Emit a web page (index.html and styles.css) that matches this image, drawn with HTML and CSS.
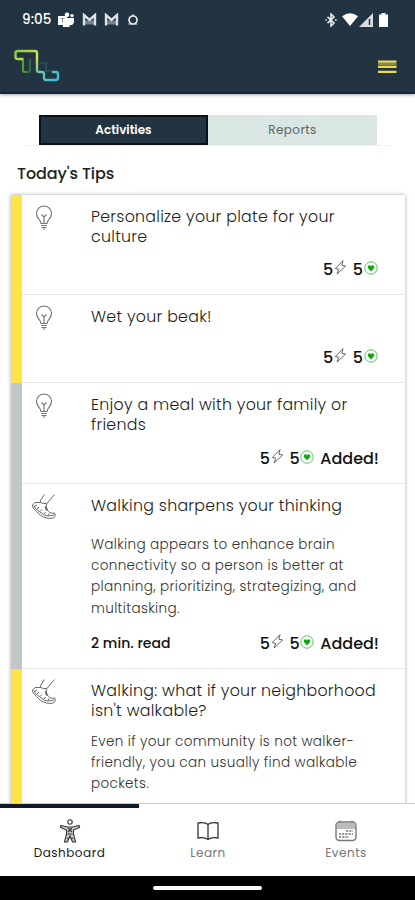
FILE: index.html
```
<!DOCTYPE html>
<html lang="en">
<head>
<meta charset="utf-8">
<title>Dashboard</title>
<link rel="stylesheet" href="styles.css">
</head>
<body>
<svg class="defs" width="0" height="0">
  <symbol id="bulb" viewBox="0 0 18 26"><g fill="none" stroke="#777" stroke-width="1.200"><path d="M6 18.500c0-4-4.500-4.500-4.500-10a7.500 7.500 0 0 1 15 0c0 5.500-4.500 6-4.500 10z"/><path d="M9 18v-6L6.500 9.500M9 12l2.500-2.500M6 20.500h6M6.500 22.500h5M8 24h2"/></g></symbol>
  <symbol id="shoe" viewBox="0 0 26 26"><g fill="none" stroke="#666" stroke-width="1"><path d="M13.500 1.500 9.500 7.500v2L4 9.500 1.500 12c0 3 2 4.500 4 6.500 3 3.500 6 5.500 10 6.500 3 .7 6 .5 7.500-.5 1.300-1 1.500-3.500.5-4.500-2 .5-5 0-6-1.500-1.500-2-3-3.500-2-7.500L23.500 1.500"/><path d="M9.500 9.500q3 1.500 6 1M3 12.500c1 4 5 5.500 8 8s7 3 12 1.500"/><path d="m14.500 13.500 1.500 4" stroke-width="2"/><path d="M4 13l2-1M6 16l2-2M9 18.500l2-2M13 21l1.500-2M17 22.500l1-2"/></g></symbol>
  <symbol id="bolt" viewBox="0 0 12 15"><path d="M8.500.7.800 8.500l3.400.8L2.600 14 11.200 6 7.400 5.300z" fill="none" stroke="#555" stroke-width=".9"/></symbol>
  <symbol id="heart" viewBox="0 0 14 14"><circle cx="7" cy="7" r="6.200" fill="none" stroke="#35b435" stroke-width=".8"/><path d="M7 10.500 4 7.300C2.700 5.500 5.300 3 7 5.200 8.700 3 11.300 5.500 10 7.300z" fill="#12a812"/></symbol>
</svg>
<header class="top">
  <div class="status">
    <div class="status-left">
      <span class="clock">9:05</span>
      <svg class="teams" viewBox="0 0 17 16"><path d="M0 4h9v9H0zM10 6h6v4q-1 4-5 3zM4 6h7.500v9H5z" fill="#fff"/><circle cx="9" cy="2.800" r="2.300" fill="#fff"/><circle cx="14" cy="3.600" r="1.700" fill="#fff"/><path d="M2.500 6.500h4M4.500 6.500v4" stroke="#8b959e" stroke-width="1"/></svg>
      <svg class="mail" viewBox="0 0 15 12"><path d="M3 7h9v4H3z" fill="#75828e"/><path d="M2 12V1.500L7.500 6.500 13 1.500V12" fill="none" stroke="#dce1e5" stroke-width="2.400"/></svg>
      <svg class="mail" viewBox="0 0 15 12"><path d="M3 7h9v4H3z" fill="#75828e"/><path d="M2 12V1.500L7.500 6.500 13 1.500V12" fill="none" stroke="#dce1e5" stroke-width="2.400"/></svg>
      <svg class="ring" viewBox="0 0 12 13"><circle cx="6" cy="7" r="4" fill="none" stroke="#e5e8ea" stroke-width="1.700"/><path d="M4.500 3 6 1.500 7.500 3M1.500 11h9" fill="none" stroke="#e5e8ea"/></svg>
    </div>
    <div class="status-right">
      <svg class="bt" viewBox="0 0 12 14"><path d="M2.500 3.800 9 10l-3 3V1l3 3-6.500 6.200M.3 7h1.500M10 7h1.700" fill="none" stroke="#e7eaec" stroke-width="1.600"/></svg>
      <svg class="wifi" viewBox="0 0 16 13"><path d="M0 3.200Q8-2.600 16 3.200L8 13z" fill="#fff"/></svg>
      <svg class="signal" viewBox="0 0 14 14"><path d="M14 0v14H0z" fill="#d9dde0"/><path d="M10.500 6v6" stroke="#223342" stroke-width="1.500"/></svg>
      <svg class="battery" viewBox="0 0 9 14"><path d="M2.500 0h4v1.500H9V14H0V1.500h2.500z" fill="#fff"/></svg>
    </div>
  </div>
  <div class="brand">
    <svg class="logo" viewBox="0 0 46 34">
      <defs><linearGradient id="lg" x1="0" y1="0" x2="1" y2="1"><stop offset="0" stop-color="#86cd35"/><stop offset=".35" stop-color="#dce454"/><stop offset=".6" stop-color="#75c992"/><stop offset="1" stop-color="#42b7dc"/></linearGradient><linearGradient id="gr" x1="0" y1="0" x2="1" y2="0"><stop offset="0" stop-color="#79c82d"/><stop offset="1" stop-color="#2c6b42"/></linearGradient></defs>
      <path d="M26 14h6v8h7" fill="none" stroke="#2a4f60" stroke-width="1.700"/>
      <path d="M3 10h6v11q0 2 2 2h3q2 0 2-2V10" fill="none" stroke="url(#gr)" stroke-width="2.200"/>
      <path d="M9 10H4q-2.500 0-2.500-2V4Q1.500 2 4 2h17q2 0 2 2v17q0 2 2 2h3q2 0 2 2v4q0 2 2 2h9q3 0 3-2v-4q0-2-2-2h-4" fill="none" stroke="url(#lg)" stroke-width="2.400"/>
    </svg>
    <svg class="menu" viewBox="0 0 20 14"><path d="M0 4h19.500" stroke="#8d8a42" stroke-width="2.500"/><path d="M0 1.300h19.500M0 6.800h19.500M0 12.200h19.500" stroke="#e9dc50" stroke-width="2.400"/></svg>
  </div>
</header>
<main class="page">
  <div class="tabs"><span class="tab on"><b>Activities</b></span><span class="tab"><b>Reports</b></span></div>
  <h1>Today's Tips</h1>
  <section class="card">
    <article class="tip new t1">
      <svg class="bulb"><use href="#bulb"/></svg>
      <div class="content"><h2>Personalize your plate for your<br>culture</h2>
      <div class="meta"><span class="pts">5<svg class="bolt"><use href="#bolt"/></svg></span><span class="pts">5<svg class="heart"><use href="#heart"/></svg></span></div></div>
    </article>
    <article class="tip new t2">
      <svg class="bulb"><use href="#bulb"/></svg>
      <div class="content"><h2>Wet your beak!</h2>
      <div class="meta"><span class="pts">5<svg class="bolt"><use href="#bolt"/></svg></span><span class="pts">5<svg class="heart"><use href="#heart"/></svg></span></div></div>
    </article>
    <article class="tip t3">
      <svg class="bulb"><use href="#bulb"/></svg>
      <div class="content"><h2>Enjoy a meal with your family or<br>friends</h2>
      <div class="meta"><span class="pts">5<svg class="bolt"><use href="#bolt"/></svg></span><span class="pts">5<svg class="heart"><use href="#heart"/></svg></span><span class="added">Added!</span></div></div>
    </article>
    <article class="tip t4">
      <svg class="shoe"><use href="#shoe"/></svg>
      <div class="content"><h2>Walking sharpens your thinking</h2>
      <p class="long">Walking appears to enhance brain<br>connectivity so a person is better at<br>planning, prioritizing, strategizing, and<br>multitasking.</p>
      <div class="meta"><span class="read">2 min. read</span><span class="pts">5<svg class="bolt"><use href="#bolt"/></svg></span><span class="pts">5<svg class="heart"><use href="#heart"/></svg></span><span class="added">Added!</span></div></div>
    </article>
    <article class="tip new t5">
      <svg class="shoe"><use href="#shoe"/></svg>
      <div class="content"><h2>Walking: what if your neighborhood<br>isn't walkable?</h2>
      <p>Even if your community is not walker-<br>friendly, you can usually find walkable<br>pockets.</p></div>
    </article>
  </section>
</main>
<nav class="nav">
  <div class="item on">
    <svg viewBox="0 0 24 24"><g fill="none" stroke="#333" stroke-width="1.100"><circle cx="12" cy="3" r="2.200"/><path fill="#ccc" d="M3 6.500 9.500 8h5L21 6.500l.500 2-6 2.500v4l2 8h-3L12 17l-2.500 6h-3l2-8v-4l-6-2.500z"/><path d="M9.500 15h5M9 19l2 1M15 19l-2 1M10 9l4 4M14 9l-4 4"/></g></svg>
    <span>Dashboard</span>
  </div>
  <div class="item">
    <svg viewBox="0 0 24 24"><path d="M12 5.500C9.500 3.200 5 3.500 2 4v15c3-.7 7-.8 10 1.500 3-2.300 7-2.200 10-1.500V4c-3-.5-7.500-.8-10 1.500zv15" fill="none" stroke="#333" stroke-width="1.300"/></svg>
    <span>Learn</span>
  </div>
  <div class="item">
    <svg viewBox="0 0 24 24"><rect x="2" y="3" width="20" height="18.500" rx="3.500" fill="#fff" stroke="#777" stroke-width="1.400"/><path d="M3 8V6q0-2 2-2h14q2 0 2 2v2z" fill="#bbb"/><path d="M2 9h20M6 1.500V4M18 1.500V4" stroke="#777"/><path d="M12 12h7M5 15h14M5 18h10" stroke="#777" stroke-width="1.500" stroke-dasharray="2.200 1"/></svg>
    <span>Events</span>
  </div>
</nav>
<footer class="gesture"><i></i></footer>
</body>
</html>
```
FILE: styles.css
```
* { box-sizing: border-box; }
body { margin: 0; height: 900px; overflow: hidden; display: flex; flex-direction: column; background: #fff; color: #222; font-family: Poppins, Inter, "Open Sans", sans-serif; }
.defs { position: absolute; }
svg { display: block; flex: none; }
.top { height: 94px; flex: none; background: #223342; border-bottom: 2px solid #14263b; box-shadow: 0 1px 3px rgba(0,0,0,.35); position: relative; }
.status { height: 39px; padding: 0 27px 0 22px; display: flex; justify-content: space-between; align-items: center; color: #fff; }
.status-left, .status-right { display: flex; align-items: center; }
.clock { width: 36px; font-size: 13.500px; font-weight: 500; letter-spacing: .1px; }
.teams { width: 17px; height: 16px; }
.mail { width: 15px; height: 13px; margin-left: 7px; }
.ring { width: 12px; height: 13px; margin-left: 8px; }
.bt { width: 12px; height: 14px; }
.wifi { width: 16px; height: 13px; margin-left: 5px; }
.signal { width: 14px; height: 14px; margin-left: 1px; }
.battery { width: 9px; height: 14px; margin-left: 6px; }
.brand { height: 54px; padding: 10px 18px 0 14px; display: flex; justify-content: space-between; }
.logo { width: 46px; height: 34px; }
.menu { width: 19px; height: 14px; margin-top: 11px; }
.page { height: 710px; flex: none; overflow: hidden; }
.tabs { margin: 21px 24px 0; padding: 0 14px 0 15px; display: flex; height: 31px; border-bottom: 1px solid #f0f1f1; }
.tab { width: 169px; height: 30px; display: flex; align-items: center; justify-content: center; background: #dae6e4; color: #5b6565; font-size: 12px; }
.tab b { font-weight: 400; letter-spacing: .4px; }
.tab.on { background: #223342; color: #fff; border: 2px solid #0c1116; }
.tab.on b { font-weight: 600; letter-spacing: 0; }
h1 { margin: 18px 0 11px 17px; font-size: 16px; line-height: 20px; font-weight: 500; letter-spacing: -.1px; color: #222; }
.card { margin: 0 10px 0 11px; background: #fff; box-shadow: 0 0 4px rgba(0,0,0,.35); }
.tip { display: grid; grid-template-columns: 69px 1fr; border-left: 11px solid #bfc8c6; padding-right: 26px; box-shadow: inset 0 -1px #e6e6e6; }
.tip.new { border-left-color: #ffe347; }
.t1 { height: 100px; }
.t2 { height: 88px; }
.t3 { height: 101px; }
.t4 { height: 185px; }
.t5 { height: 170px; box-shadow: none; }
.bulb { width: 18px; height: 26px; margin: 10px 0 0 13px; }
.shoe { width: 26px; height: 26px; margin: 9px 0 0 9px; }
.content { display: flex; flex-direction: column; white-space: nowrap; }
h2 { margin: 12px 0 0; font-size: 15.800px; line-height: 19.500px; font-weight: 300; letter-spacing: .28px; color: #1c1c1c; }
p { margin: 11px 0 0; font-size: 13.600px; line-height: 21.200px; font-weight: 300; letter-spacing: .33px; color: #333; }
p.long { margin-top: 18.500px; }
.meta { margin: auto 0 16px; height: 20px; display: flex; align-items: center; justify-content: flex-end; gap: 6px; font-size: 16px; font-weight: 500; color: #111; }
.pts { display: flex; align-items: center; gap: .5px; }
.pts:last-child { margin-right: 1.500px; }
.bolt { width: 13px; height: 15px; margin-top: -4px; }
.heart { width: 14px; height: 14px; margin-top: -3px; }
.read { margin-right: auto; font-size: 14px; letter-spacing: .05px; }
.nav { height: 72px; flex: none; display: grid; grid-template-columns: 139px 138px 138px; background: #fff; position: relative; box-shadow: 0 -1px #ccc; }
.item { display: flex; flex-direction: column; align-items: center; padding-top: 15px; font-size: 12px; line-height: 18px; letter-spacing: .5px; color: #777; }
.item svg { width: 24px; height: 24px; }
.item.on { border-top: 4px solid #101b2a; padding-top: 11px; color: #1c1c1c; }
.item span { margin-top: 1px; }
.gesture { height: 24px; flex: none; background: #000; padding-top: 10px; }
.gesture i { display: block; width: 109px; height: 4px; margin: 0 auto; border-radius: 2px; background: #fff; }
```
